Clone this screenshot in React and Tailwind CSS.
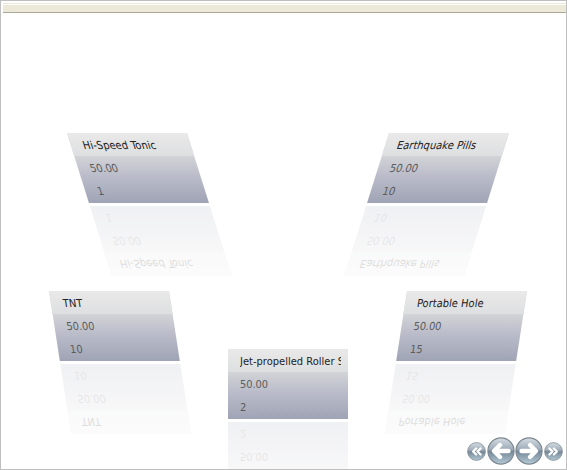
const cards = [
  { name: "Hi-Speed Tonic", qty: "1", place: "left-[67px] top-[133px] skew-x-[17.4deg]" },
  { name: "Earthquake Pills", qty: "10", place: "left-[389px] top-[133px] -skew-x-[17.4deg]" },
  { name: "TNT", qty: "10", place: "left-[49px] top-[291px] skew-x-[8.8deg]" },
  { name: "Portable Hole", qty: "15", place: "left-[407px] top-[291px] -skew-x-[8.8deg]" },
  { name: "Jet-propelled Roller Skates", qty: "2", place: "left-[228px] top-[349px]" },
];

function Face({ name, qty }) {
  return (
    <div className="h-[70px] w-[120px] bg-linear-to-b from-[#d3d4d7] from-33% via-[#bbbdca] via-60% to-[#9fa4b5] text-[11px] text-[#5c5c5c]">
      <div className="h-[23px] bg-linear-to-b from-[#e9e9e9] to-[#dedfe0] pr-[7px] pl-3 leading-[25px] text-[#222]">
        <div className="h-[23px] overflow-hidden whitespace-nowrap tracking-[0.02px]">{name}</div>
      </div>
      <div className="h-[23px] pl-3 leading-[25px] tracking-[-0.1px]">50.00</div>
      <div className="h-6 pl-3 leading-[26px]">{qty}</div>
    </div>
  );
}

function Card({ name, qty, place }) {
  return (
    <div className={`absolute flex origin-top-left flex-col gap-[3px] ${place}`}>
      <Face name={name} qty={qty} />
      <div aria-hidden="true" className="-scale-y-100 opacity-[0.15]">
        <Face name={name} qty={qty} />
      </div>
    </div>
  );
}

function Orb({ id, size, children }) {
  return (
    <button className="block">
      <svg width={size} height={size} viewBox="0 0 28 28" className="block">
        <defs>
          <linearGradient id={id} x1="0" y1="0" x2="0" y2="1">
            <stop offset="0" stopColor="#d5dde3" />
            <stop offset="0.42" stopColor="#a0adb8" />
            <stop offset="0.52" stopColor="#748797" />
            <stop offset="1" stopColor="#b5cbd7" />
          </linearGradient>
        </defs>
        <circle cx="14" cy="14" r="13.1" fill={`url(#${id})`} stroke="#7c8790" strokeWidth="1.1" />
        <g fill="none" stroke="#fff" strokeLinecap="round" strokeLinejoin="round">{children}</g>
      </svg>
    </button>
  );
}

export default function App() {
  return (
    <div className="relative flex h-[470px] w-[567px] flex-col overflow-hidden border border-[#bfbfbf] bg-white pt-0.5 pl-0.5 font-['DejaVu_Sans_Condensed','DejaVu_Sans',sans-serif] [font-stretch:condensed]">
      <div className="h-px bg-[#ece9d8]" />
      <div className="mt-px h-2 border-b border-[#aca899] bg-[#ece9d8]" />
      <div className="absolute -top-px -left-px">
        {cards.map((c) => (
          <Card key={c.name} {...c} />
        ))}
      </div>
      <div className="mt-auto flex items-center justify-end gap-px pr-[3px] pb-1">
        <Orb id="first" size={19}>
          <path d="M13.5 9.5 9 14l4.5 4.5M20 9.5 15.5 14l4.5 4.5" strokeWidth="3.4" />
        </Orb>
        <div className="flex">
          <Orb id="prev" size={28}>
            <path d="M21.5 14H8M13 8 7 14l6 6" strokeWidth="4.4" />
          </Orb>
          <Orb id="next" size={28}>
            <path d="M6.5 14H20M15 8l6 6-6 6" strokeWidth="4.4" />
          </Orb>
        </div>
        <Orb id="last" size={19}>
          <path d="m8 9.5 4.5 4.5L8 18.5M14.5 9.5 19 14l-4.5 4.5" strokeWidth="3.4" />
        </Orb>
      </div>
    </div>
  );
}
